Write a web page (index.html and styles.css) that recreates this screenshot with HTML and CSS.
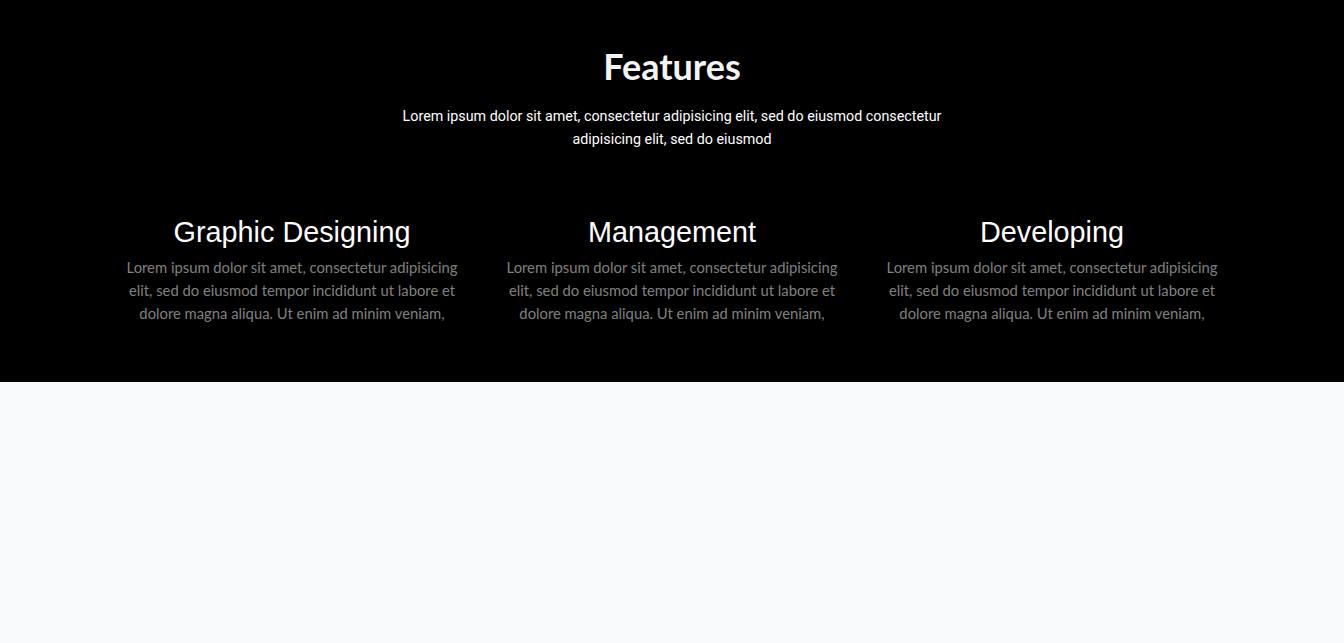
FILE: index.html
```html
<!DOCTYPE html>
<html lang="en">
<head>
<meta charset="utf-8">
<title>Features</title>
<link rel="stylesheet" href="styles.css">
</head>
<body>
<section class="features">
  <div class="container">
    <div class="intro">
      <h2 class="intro-title">Features</h2>
      <p class="intro-text">Lorem ipsum dolor sit amet, consectetur adipisicing elit, sed do eiusmod consectetur adipisicing elit, sed do eiusmod</p>
    </div>
    <div class="grid">
      <div class="item">
        <h3 class="item-title">Graphic Designing</h3>
        <p class="item-text">Lorem ipsum dolor sit amet, consectetur adipisicing elit, sed do eiusmod tempor incididunt ut labore et dolore magna aliqua. Ut enim ad minim veniam,</p>
      </div>
      <div class="item">
        <h3 class="item-title">Management</h3>
        <p class="item-text">Lorem ipsum dolor sit amet, consectetur adipisicing elit, sed do eiusmod tempor incididunt ut labore et dolore magna aliqua. Ut enim ad minim veniam,</p>
      </div>
      <div class="item">
        <h3 class="item-title">Developing</h3>
        <p class="item-text">Lorem ipsum dolor sit amet, consectetur adipisicing elit, sed do eiusmod tempor incididunt ut labore et dolore magna aliqua. Ut enim ad minim veniam,</p>
      </div>
    </div>
  </div>
</section>
</body>
</html>
```

FILE: styles.css
```css
html, body {
  margin: 0;
  padding: 0;
}
body {
  background: #f8f9fb;
  font-family: "Lato", "Noto Sans", sans-serif;
  min-height: 643px;
}
.features {
  background: #000;
  height: 382px;
  box-sizing: border-box;
  padding-top: 43px;
}
.container {
  width: 1140px;
  margin: 0 auto;
}
.intro {
  width: 560px;
  margin: 0 auto;
  text-align: center;
}
.intro-title {
  margin: 0;
  font-family: "Lato", sans-serif;
  font-weight: 700;
  font-size: 36px;
  line-height: 46px;
  color: #f4f4f4;
}
.intro-text {
  margin: 16px 0 0;
  font-family: "Roboto", sans-serif;
  font-size: 14.3px;
  line-height: 23px;
  color: #fff;
}
.grid {
  display: grid;
  grid-template-columns: repeat(3, 1fr);
  margin-top: 64px;
}
.item {
  padding: 0 20px;
  text-align: center;
}
.item-title {
  margin: 0 0 7px;
  font-family: "Liberation Sans", Arial, sans-serif;
  font-weight: 400;
  font-size: 28.8px;
  line-height: 34px;
  color: #fff;
}
.item-text {
  margin: 0;
  font-size: 14.8px;
  line-height: 23px;
  color: #808080;
}
```
